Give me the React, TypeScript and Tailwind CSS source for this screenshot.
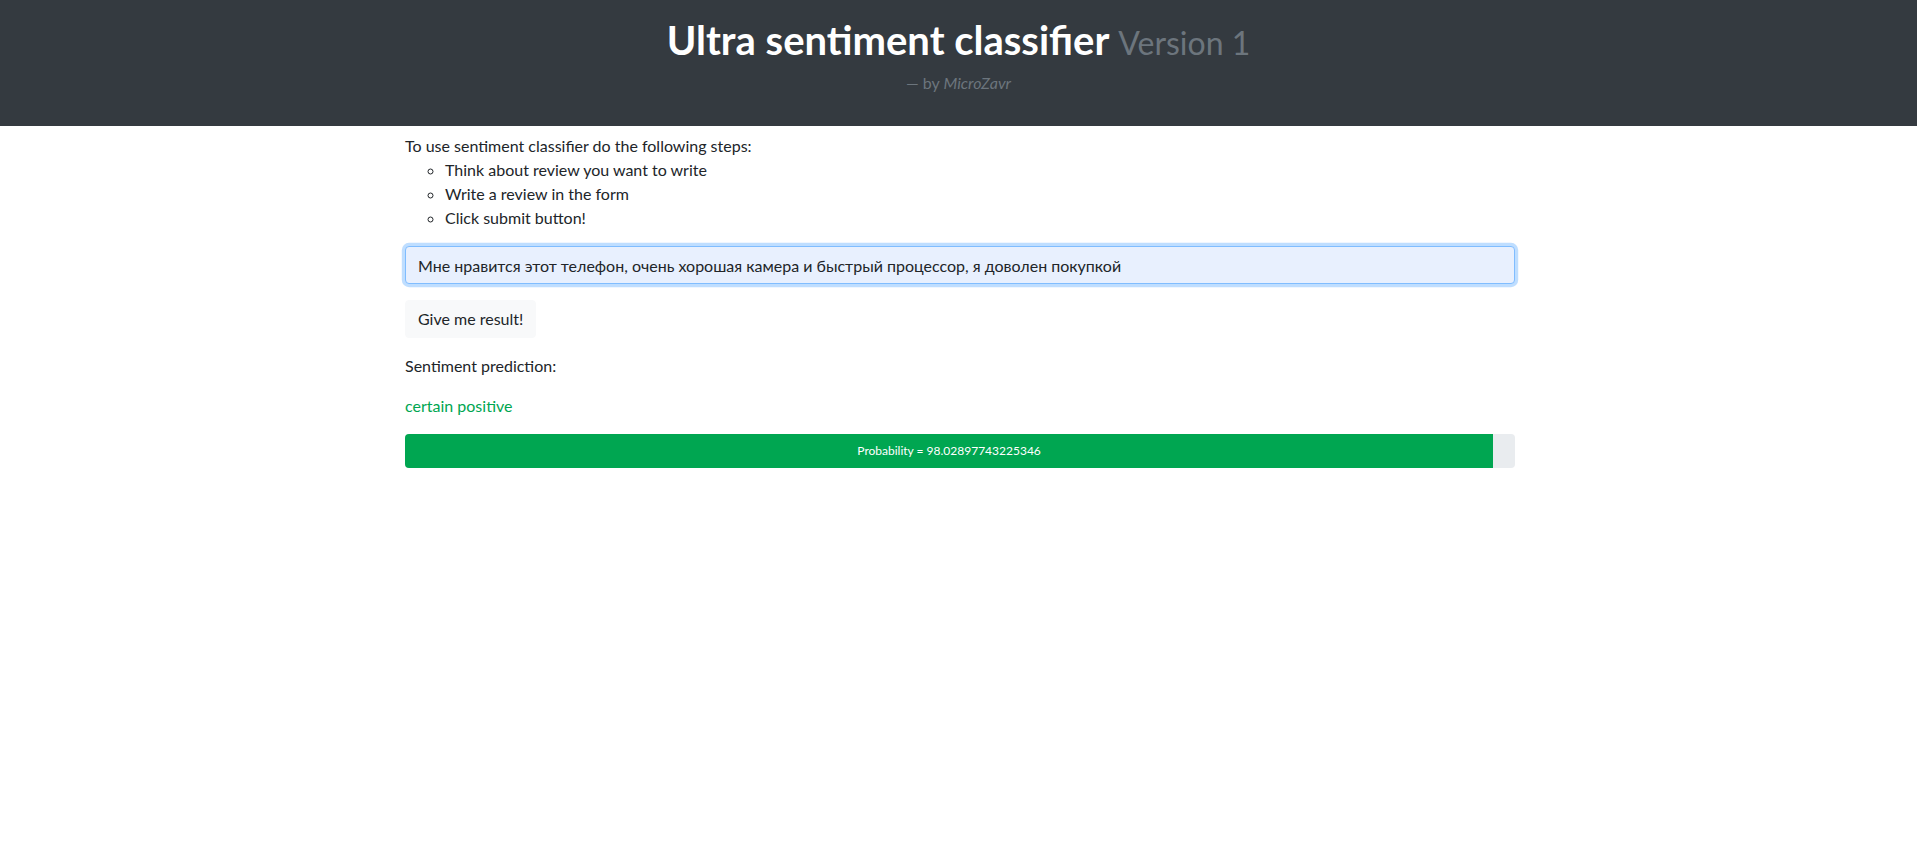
import React from "react";

export default function App() {
  const prob = 98.02897743225346;
  return (
    <div className="min-h-[862px] bg-white text-[#212529]" style={{ fontFamily: '"Lato", "Liberation Sans", sans-serif' }}>
      <header className="h-[126px] bg-[#343a40] pt-[16px] text-center">
        <h1 className="text-[40px] leading-[48px] font-bold text-white">
          Ultra sentiment classifier{" "}
          <small className="text-[32px] font-normal text-[#6c757d]">Version 1</small>
        </h1>
        <div className="mt-[4px] text-[16px] leading-[24px] text-[#6c757d]">
          — by <i>MicroZavr</i>
        </div>
      </header>
      <main className="mx-auto w-[1113px] pl-[3px] pt-[8px] text-[16px] leading-[24px]">
        <div>To use sentiment classifier do the following steps:</div>
        <ul className="list-[circle] pl-10 mb-4">
          <li>Think about review you want to write</li>
          <li>Write a review in the form</li>
          <li>Click submit button!</li>
        </ul>
        <div className="mb-4">
          <input
            className="block w-full h-[38px] rounded-[4px] border border-[#80bdff] bg-[#e8f0fe] px-3 text-[16px] text-[#212529] outline-none shadow-[0_0_0_3.2px_rgba(0,123,255,0.25)]"
            defaultValue="Мне нравится этот телефон, очень хорошая камера и быстрый процессор, я доволен покупкой"
          />
        </div>
        <button className="h-[38px] rounded-[4px] border border-[#f8f9fa] bg-[#f8f9fa] px-3 text-[16px] text-[#212529]">
          Give me result!
        </button>
        <p className="mt-4 mb-4">Sentiment prediction:</p>
        <p className="mb-4 text-[#00a651]">certain positive</p>
        <div className="flex h-[34px] w-full overflow-hidden rounded-[4px] bg-[#e9ecef]">
          <div
            className="flex items-center justify-center bg-[#00a651] text-[12px] text-white"
            style={{ width: `${prob}%` }}
          >
            Probability = {prob}
          </div>
        </div>
      </main>
    </div>
  );
}
